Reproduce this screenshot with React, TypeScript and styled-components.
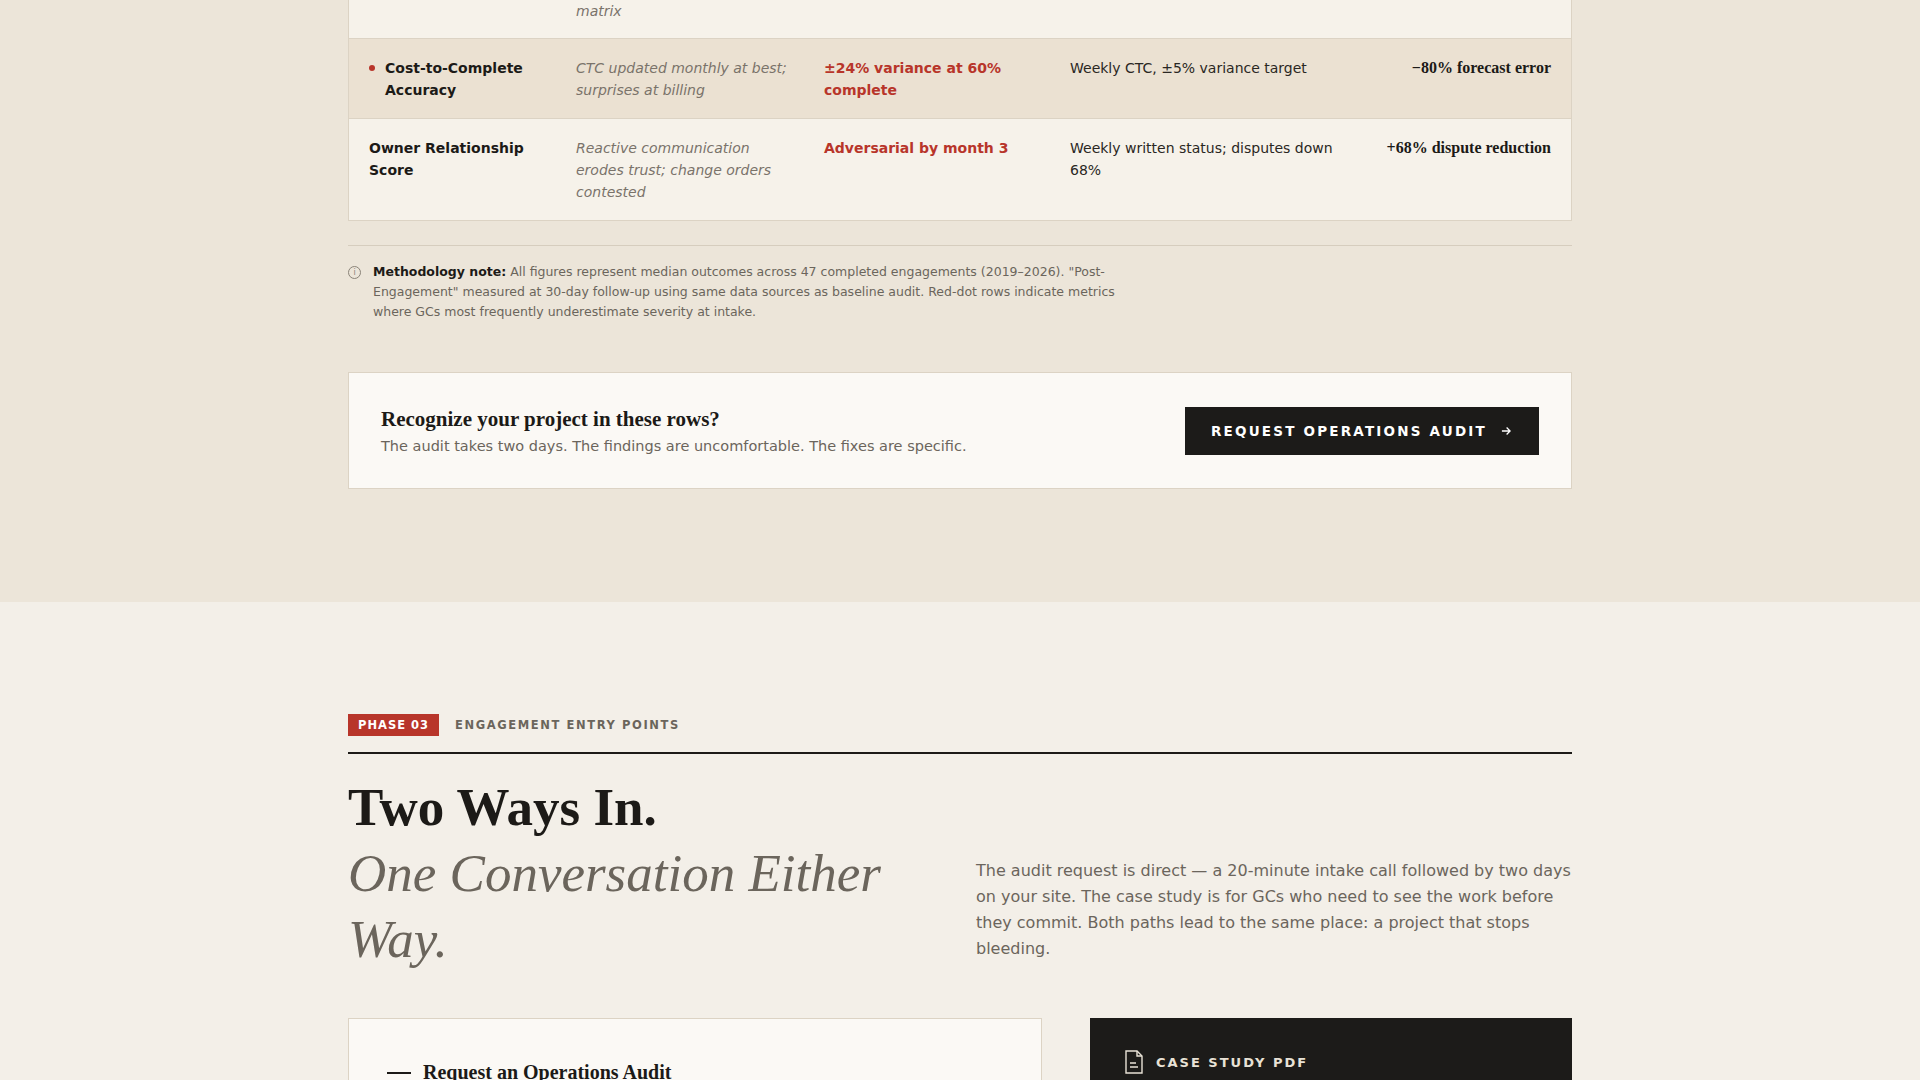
import React from 'react';
import styled, { createGlobalStyle } from 'styled-components';

const Global = createGlobalStyle`
  body { margin: 0; background: #f3efe8; font-family: "DejaVu Sans", sans-serif; color: #1c1a17; }
`;

const serif = `"Liberation Serif", "Times New Roman", serif`;

const TopBand = styled.section`
  background: #ece5d9;
  padding-bottom: 113px;
`;

const Wrap = styled.div`
  width: 1224px;
  margin: 0 auto;
`;

const Table = styled.div`
  border: 1px solid #dcd3c4;
  border-top: none;
`;

const Row = styled.div<{ $hl?: boolean; $partial?: boolean }>`
  display: grid;
  grid-template-columns: 207px 248px 246px 300px 1fr;
  padding: ${p => (p.$partial ? '0 20px 16px' : '18px 20px 17px')};
  background: ${p => (p.$hl ? '#ebe1d2' : '#f6f2ea')};
  border-bottom: 1px solid #dcd3c4;
  font-size: 14px;
  line-height: 22px;
  &:last-child { border-bottom: none; }
`;

const Metric = styled.div<{ $dot?: boolean }>`
  font-weight: bold;
  color: #1c1a17;
  position: relative;
  padding-left: ${p => (p.$dot ? '16px' : '0')};
  padding-right: 16px;
  &::before {
    content: '';
    display: ${p => (p.$dot ? 'block' : 'none')};
    position: absolute;
    left: 0;
    top: 8px;
    width: 6px;
    height: 6px;
    border-radius: 50%;
    background: #b8352a;
  }
`;

const Before = styled.div`
  font-style: italic;
  color: #7a736a;
  padding-right: 28px;
`;

const Impact = styled.div`
  font-weight: bold;
  color: #b8352a;
  padding-right: 20px;
`;

const After = styled.div`
  color: #2a2723;
  padding-right: 30px;
`;

const Delta = styled.div`
  font-family: ${serif};
  font-weight: bold;
  font-size: 16px;
  text-align: right;
`;

const Divider = styled.hr`
  border: none;
  border-top: 1px solid #d6cdbe;
  margin: 24px 0 16px;
`;

const Note = styled.div`
  display: flex;
  gap: 12px;
  width: 780px;
  font-size: 12.5px;
  line-height: 20px;
  color: #6b655c;
  b { color: #1c1a17; }
`;

const InfoIcon = styled.span`
  flex: none;
  width: 11px;
  height: 11px;
  margin-top: 4px;
  border: 1px solid #8a8378;
  border-radius: 50%;
  font-size: 8px;
  line-height: 11px;
  text-align: center;
  color: #8a8378;
`;

const Cta = styled.div`
  margin-top: 50px;
  background: #fbf9f5;
  border: 1px solid #dcd3c4;
  height: 117px;
  box-sizing: border-box;
  padding: 0 32px;
  display: flex;
  align-items: center;
  justify-content: space-between;
`;

const CtaTitle = styled.div`
  font-family: ${serif};
  font-weight: bold;
  font-size: 21px;
  margin-bottom: 6px;
`;

const CtaSub = styled.div`
  font-size: 14.5px;
  color: #6b655c;
`;

const DarkButton = styled.button`
  background: #1c1b19;
  color: #fff;
  border: none;
  height: 48px;
  width: 354px;
  font-family: "DejaVu Sans", sans-serif;
  font-weight: bold;
  font-size: 13.5px;
  letter-spacing: 2.2px;
  display: flex;
  align-items: center;
  justify-content: center;
  gap: 12px;
`;

const Lower = styled.section`
  padding-top: 112px;
`;

const PhaseRow = styled.div`
  display: flex;
  align-items: center;
  gap: 16px;
  padding-bottom: 16px;
  border-bottom: 2px solid #1c1a17;
`;

const Badge = styled.span`
  background: #b8352a;
  color: #fff;
  font-size: 11.5px;
  font-weight: bold;
  letter-spacing: 1px;
  padding: 4px 10px;
`;

const Eyebrow = styled.span`
  font-size: 11.5px;
  font-weight: bold;
  letter-spacing: 1.6px;
  color: #6b655c;
`;

const Intro = styled.div`
  display: grid;
  grid-template-columns: 1fr 596px;
  gap: 40px;
  align-items: end;
  margin-top: 20px;
`;

const Heading = styled.h2`
  margin: 0;
  font-family: ${serif};
  font-size: 53px;
  line-height: 66px;
  font-weight: bold;
  color: #1c1a17;
  em { display: block; font-weight: normal; color: #6b655c; max-width: 560px; }
`;

const Lede = styled.p`
  margin: 0 0 10px;
  font-size: 16px;
  line-height: 26px;
  color: #6b655c;
`;

const Cards = styled.div`
  display: grid;
  grid-template-columns: 694px 1fr;
  gap: 48px;
  margin-top: 46px;
`;

const LightCard = styled.div`
  background: #fbf9f5;
  border: 1px solid #dcd3c4;
  height: 300px;
  padding: 42px 38px;
  box-sizing: border-box;
`;

const CardTitle = styled.div`
  font-family: ${serif};
  font-weight: bold;
  font-size: 20px;
  display: flex;
  align-items: center;
  gap: 12px;
  &::before { content: ''; width: 24px; height: 2px; background: #1c1a17; }
`;

const DarkCard = styled.div`
  background: #1c1b19;
  height: 300px;
  padding: 32px 34px;
  box-sizing: border-box;
`;

const DarkLabel = styled.div`
  color: #e8e2d6;
  font-size: 13px;
  font-weight: bold;
  letter-spacing: 2px;
  display: flex;
  align-items: center;
  gap: 12px;
`;

const rows = [
  { m: 'Cost-to-Complete Accuracy', b: 'CTC updated monthly at best; surprises at billing', i: '±24% variance at 60% complete', a: 'Weekly CTC, ±5% variance target', d: '−80% forecast error', dot: true },
  { m: 'Owner Relationship Score', b: 'Reactive communication erodes trust; change orders contested', i: 'Adversarial by month 3', a: 'Weekly written status; disputes down 68%', d: '+68% dispute reduction' },
];

export default function App() {
  return (
    <>
      <Global />
      <TopBand>
        <Wrap>
          <Table>
            <Row $partial>
              <Metric />
              <Before>matrix</Before>
            </Row>
            {rows.map((r, i) => (
              <Row key={i} $hl={r.dot}>
                <Metric $dot={r.dot}>{r.m}</Metric>
                <Before>{r.b}</Before>
                <Impact>{r.i}</Impact>
                <After>{r.a}</After>
                <Delta>{r.d}</Delta>
              </Row>
            ))}
          </Table>
          <Divider />
          <Note>
            <InfoIcon>i</InfoIcon>
            <div>
              <b>Methodology note:</b> All figures represent median outcomes across 47 completed engagements (2019–2026). "Post-Engagement" measured at 30-day follow-up using same data sources as baseline audit. Red-dot rows indicate metrics where GCs most frequently underestimate severity at intake.
            </div>
          </Note>
          <Cta>
            <div>
              <CtaTitle>Recognize your project in these rows?</CtaTitle>
              <CtaSub>The audit takes two days. The findings are uncomfortable. The fixes are specific.</CtaSub>
            </div>
            <DarkButton>
              REQUEST OPERATIONS AUDIT
              <svg width="14" height="14" viewBox="0 0 24 24" fill="none" stroke="#fff" strokeWidth="2.2"><path d="M5 12h14M13 6l6 6-6 6" /></svg>
            </DarkButton>
          </Cta>
        </Wrap>
      </TopBand>
      <Lower>
        <Wrap>
          <PhaseRow>
            <Badge>PHASE 03</Badge>
            <Eyebrow>ENGAGEMENT ENTRY POINTS</Eyebrow>
          </PhaseRow>
          <Intro>
            <Heading>
              Two Ways In.
              <em>One Conversation Either Way.</em>
            </Heading>
            <Lede>
              The audit request is direct — a 20-minute intake call followed by two days on your site. The case study is for GCs who need to see the work before they commit. Both paths lead to the same place: a project that stops bleeding.
            </Lede>
          </Intro>
          <Cards>
            <LightCard>
              <CardTitle>Request an Operations Audit</CardTitle>
            </LightCard>
            <DarkCard>
              <DarkLabel>
                <svg width="20" height="24" viewBox="0 0 20 24" fill="none" stroke="#e8e2d6" strokeWidth="1.4"><path d="M2 1h11l5 5v17H2z" /><path d="M13 1v5h5M6 13h6M6 17h8" /></svg>
                CASE STUDY PDF
              </DarkLabel>
            </DarkCard>
          </Cards>
        </Wrap>
      </Lower>
    </>
  );
}
